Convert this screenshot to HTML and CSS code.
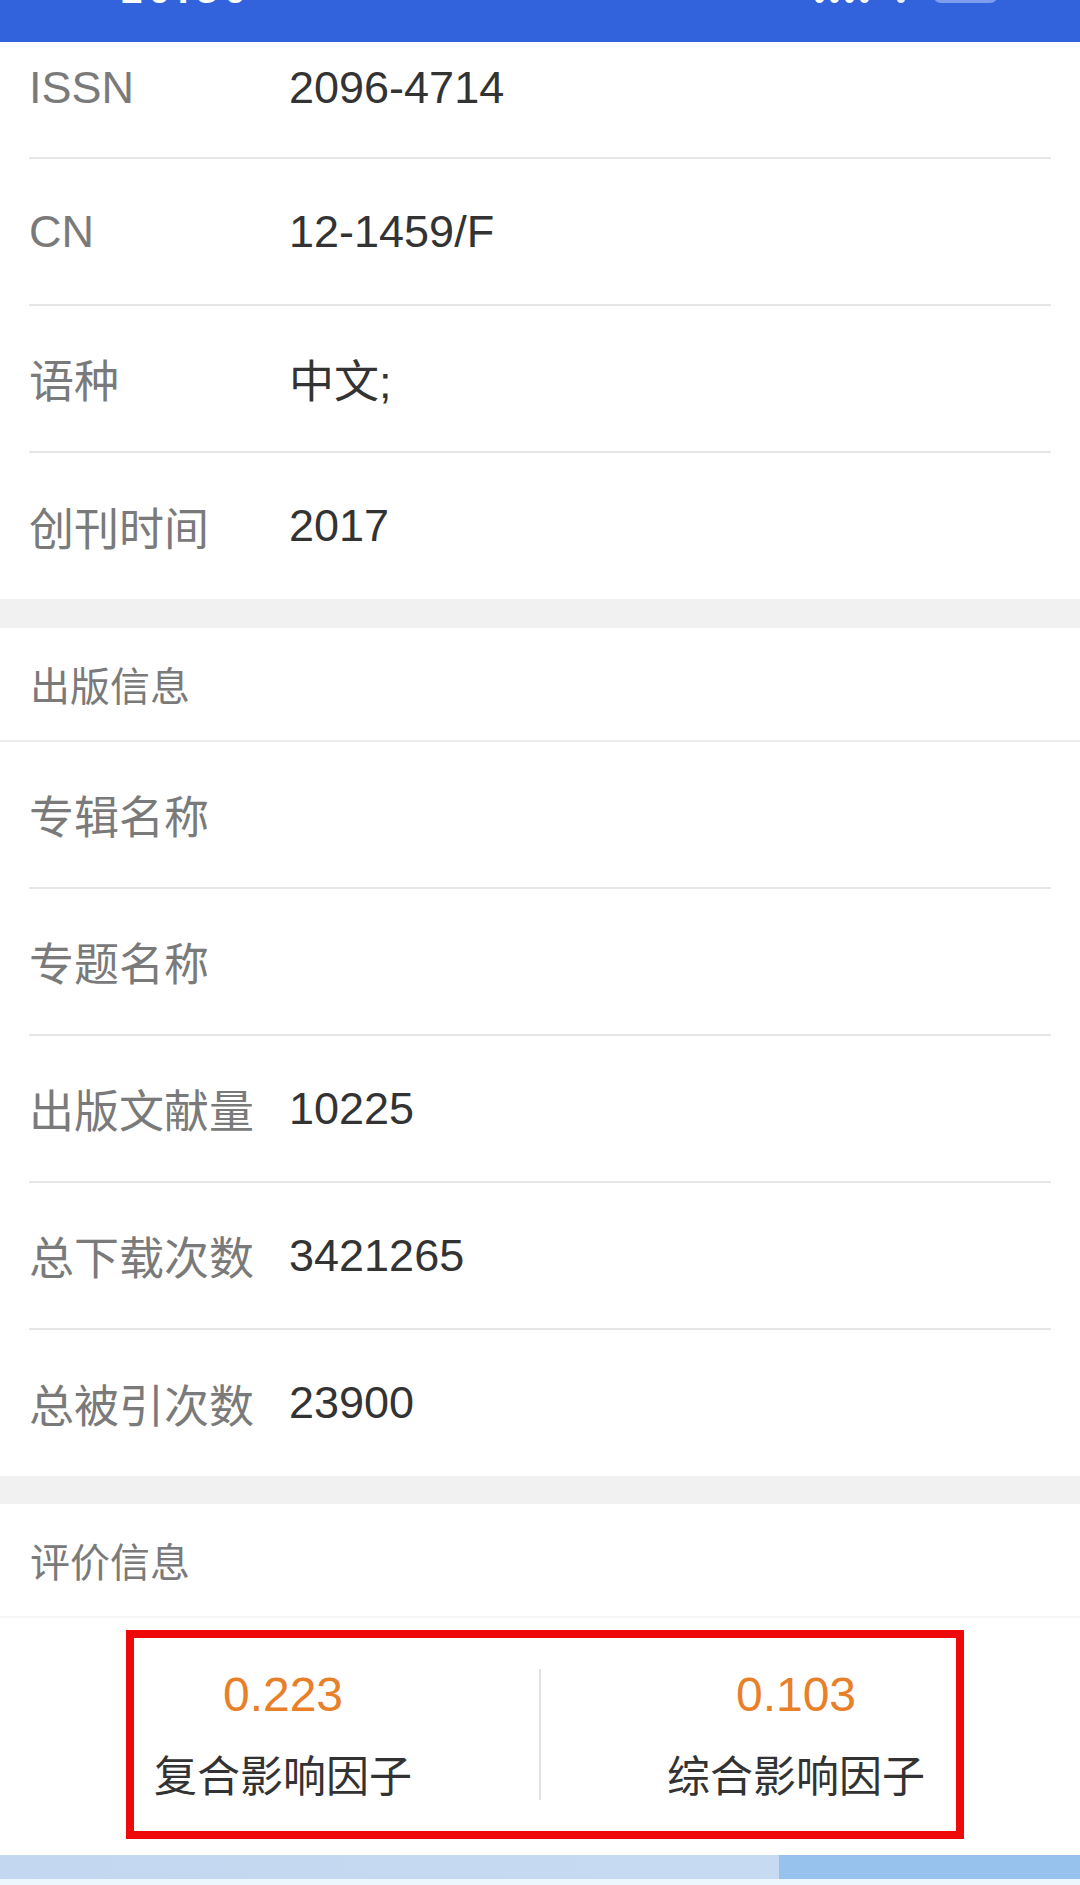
FILE: index.html
```html
<!DOCTYPE html>
<html lang="zh-CN">
<head>
<meta charset="utf-8">
<title>期刊信息</title>
<link rel="stylesheet" href="styles.css">
</head>
<body>
<div class="status">
  <span class="time">10:30</span>
  <span class="status-right">
    <span class="signal"><i></i><i></i><i></i><i></i></span>
    <span class="wifi"></span>
    <span class="battery"></span>
  </span>
</div>

<div class="card">
  <div class="row first"><span class="label latin">ISSN</span><span class="value">2096-4714</span></div>
  <div class="row"><span class="label latin">CN</span><span class="value">12-1459/F</span></div>
  <div class="row"><span class="label">语种</span><span class="value">中文;</span></div>
  <div class="row last"><span class="label">创刊时间</span><span class="value">2017</span></div>
</div>

<div class="gap"></div>

<div class="section-head">出版信息</div>
<div class="card">
  <div class="row"><span class="label">专辑名称</span><span class="value"></span></div>
  <div class="row"><span class="label">专题名称</span><span class="value"></span></div>
  <div class="row"><span class="label">出版文献量</span><span class="value">10225</span></div>
  <div class="row"><span class="label">总下载次数</span><span class="value">3421265</span></div>
  <div class="row last"><span class="label">总被引次数</span><span class="value">23900</span></div>
</div>

<div class="gap gap2"></div>

<div class="section-head light">评价信息</div>
<div class="eval">
  <div class="eval-box">
    <div class="cell cell-left">
      <div class="metric">
        <span class="num">0.223</span>
        <span class="name">复合影响因子</span>
      </div>
    </div>
    <div class="vline"></div>
    <div class="cell cell-right">
      <div class="metric">
        <span class="num">0.103</span>
        <span class="name">综合影响因子</span>
      </div>
    </div>
  </div>
</div>

<div class="band"><div class="band-left"></div><div class="band-right"></div></div>
<div class="band-foot"></div>
</body>
</html>
```

FILE: styles.css
```css
* { box-sizing: border-box; }

html, body {
  margin: 0;
  padding: 0;
  background: #ffffff;
  width: 1080px;
  height: 1885px;
  overflow: hidden;
  font-family: "Liberation Sans", "Noto Sans CJK SC", sans-serif;
}

.status {
  height: 42px;
  background: #3263dd;
  display: flex;
  justify-content: space-between;
  align-items: flex-start;
  padding: 0 82px 0 120px;
  overflow: hidden;
}

.time {
  color: #ffffff;
  font-weight: bold;
  font-size: 40px;
  line-height: 40px;
  margin-top: -31px;
  letter-spacing: 6px;
}

.status-right {
  display: flex;
  align-items: flex-start;
  gap: 28px;
}

.signal {
  display: flex;
  gap: 6px;
  margin-top: -6px;
}

.signal i {
  display: block;
  width: 9px;
  height: 9px;
  border-radius: 50%;
  background: #ffffff;
}

.wifi {
  display: block;
  width: 8px;
  height: 8px;
  margin-top: -5px;
  border-radius: 50%;
  background: #e8eefc;
}

.battery {
  display: block;
  width: 65px;
  height: 30px;
  margin-top: -27px;
  border-radius: 8px;
  background: #7f9ded;
}

.card {
  background: #ffffff;
}

.row {
  margin: 0 29px;
  height: 147px;
  display: flex;
  align-items: center;
  border-bottom: 2px solid #e6e6e6;
  font-size: 45px;
}

.row.first {
  height: 117px;
  padding-bottom: 24px;
}

.row.last {
  border-bottom: none;
  height: 146px;
}

.label {
  width: 260px;
  padding-left: 0;
  color: #7a7a7a;
  flex: none;
  white-space: nowrap;
}

.value {
  color: #333333;
  white-space: nowrap;
}

.gap {
  height: 29px;
  background: #f1f1f1;
}

.gap2 {
  height: 28px;
}

.section-head {
  height: 114px;
  display: flex;
  align-items: center;
  padding-left: 30px;
  font-size: 40px;
  color: #7a7a7a;
  border-bottom: 2px solid #ececec;
}

.section-head.light {
  border-bottom: 2px solid #f6f6f6;
}

.eval {
  padding: 12px 116px 16px 126px;
}

.eval-box {
  height: 209px;
  border: 8px solid #ee0a0a;
  display: flex;
  align-items: flex-start;
}

.cell {
  flex: 1;
  display: flex;
  padding-top: 28px;
}

.cell-left {
  flex: 0 0 405px;
  justify-content: flex-start;
  padding-left: 20px;
}

.cell-right {
  justify-content: flex-end;
  padding-right: 31px;
}

.metric {
  display: flex;
  flex-direction: column;
  align-items: center;
}

.num {
  font-size: 48px;
  line-height: 58px;
  color: #e8802a;
}

.name {
  margin-top: 27px;
  font-size: 43px;
  line-height: 52px;
  color: #333333;
  white-space: nowrap;
}

.vline {
  width: 2px;
  height: 131px;
  margin-top: 31px;
  background: #e2e2e2;
  flex: none;
}

.band {
  height: 24px;
  display: flex;
}

.band-left {
  width: 779px;
  background: linear-gradient(90deg, #c3d8f0, #c6daf1);
}

.band-right {
  flex: 1;
  background: #98c2ee;
}

.band-foot {
  height: 6px;
  background: #eef6fd;
}
```
